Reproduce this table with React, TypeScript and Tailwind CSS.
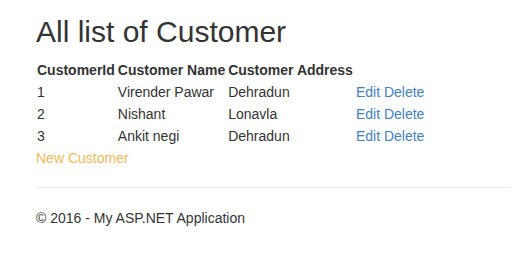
const customers = [
  { id: 1, name: 'Virender Pawar', address: 'Dehradun' },
  { id: 2, name: 'Nishant', address: 'Lonavla' },
  { id: 3, name: 'Ankit negi', address: 'Dehradun' },
];

// cell spacing used by both header and body cells
const cell = 'py-px pl-px pr-[2px] text-left';

export default function App() {
  return (
    <div className="min-h-screen bg-white pl-[36px] pt-[15px] font-['Liberation_Sans',Arial,sans-serif] text-[14px] leading-[20px] text-[#333]">
      <h2 className="mb-[11px] text-[30px] leading-[33px] font-normal">All list of Customer</h2>

      <table className="border-collapse">
        <thead>
          <tr>
            <th className={`${cell} font-bold`}>CustomerId</th>
            <th className={`${cell} font-bold`}>Customer Name</th>
            <th className={`${cell} font-bold`}>Customer Address</th>
            <th className={cell} />
          </tr>
        </thead>
        <tbody>
          {customers.map((c) => (
            <tr key={c.id}>
              <td className={cell}>{c.id}</td>
              <td className={cell}>{c.name}</td>
              <td className={cell}>{c.address}</td>
              <td className={cell}>
                <a href="#" className="text-[#4480c2]">Edit</a>{' '}
                <a href="#" className="text-[#4480c2]">Delete</a>
              </td>
            </tr>
          ))}
        </tbody>
      </table>

      <a href="#" className="mt-px block text-[#f2b955]">New Customer</a>

      <hr className="mt-[19px] border-t border-[#eee]" />
      <footer className="mt-[20px]">
        <p>© 2016 - My ASP.NET Application</p>
      </footer>
    </div>
  );
}
